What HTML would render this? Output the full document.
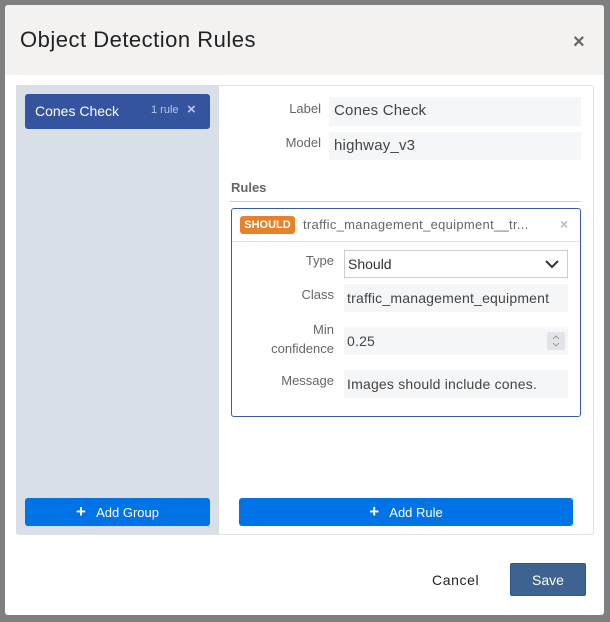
<!DOCTYPE html>
<html><head><style>
*{box-sizing:border-box;margin:0;padding:0}
body{width:610px;height:622px;background:#7f7f7f;font-family:"Liberation Sans",sans-serif;position:relative;overflow:hidden;color:#333}
.abs{position:absolute}
.modal{left:5px;top:5px;width:599px;height:610px;background:#fff;border-radius:3px;overflow:hidden}
.hdr{left:0;top:0;width:599px;height:70px;background:#f3f2f1}
.lbl{font-size:13px;color:#666;text-align:right}
.inp{background:#f5f6f7;font-size:15px;color:#444;padding-left:5px;line-height:28px;white-space:nowrap;overflow:hidden;letter-spacing:0.2px}
.btn{background:#0073e6;color:#fff;border-radius:3px;font-size:13px;text-align:center;line-height:27px}
</style></head><body>
<div class="abs modal">
 <div class="abs hdr"></div>
 <div class="abs" style="left:15px;top:22px;font-size:22px;color:#222;letter-spacing:0.5px">Object Detection Rules</div>
 <div class="abs" style="left:568px;top:26px;font-size:20px;color:#666;font-weight:bold">×</div>
</div>
<div class="abs" style="left:16px;top:85px;width:578px;height:450px;border:1px solid #dde3e8;border-radius:3px;background:#fff"></div>
<div class="abs" style="left:16px;top:85px;width:203px;height:449px;background:#d8dfe6"></div>
<div class="abs" style="left:25px;top:94px;width:185px;height:35px;background:#3454a0;border-radius:3px;color:#fff">
 <span class="abs" style="left:10px;top:9px;font-size:14px">Cones Check</span>
 <span class="abs" style="left:126px;top:10px;font-size:11px;color:#bcc6e0">1 rule</span>
 <span class="abs" style="left:162px;top:7px;font-size:15px;color:#bcc6e0;font-weight:bold">×</span>
</div>
<div class="abs lbl" style="left:240px;top:101px;width:81px">Label</div>
<div class="abs inp" style="left:329px;top:97px;width:252px;height:29px">Cones Check</div>
<div class="abs lbl" style="left:240px;top:135px;width:81px">Model</div>
<div class="abs inp" style="left:329px;top:132px;width:252px;height:28px">highway_v3</div>
<div class="abs" style="left:231px;top:180px;font-size:13px;font-weight:bold;color:#666">Rules</div>
<div class="abs" style="left:230px;top:201px;width:351px;height:1px;background:#ccd"></div>
<div class="abs" style="left:231px;top:208px;width:350px;height:209px;border:1px solid #3a5ca8;border-radius:3px"></div>
<div class="abs" style="left:232px;top:241px;width:348px;height:1px;background:#dde"></div>
<div class="abs" style="left:240px;top:216px;width:55px;height:18px;background:#e8822a;border-radius:3px;color:#fff;font-size:11px;font-weight:bold;text-align:center;line-height:18px">SHOULD</div>
<div class="abs" style="left:303px;top:217px;font-size:13px;color:#666;letter-spacing:0.3px">traffic_management_equipment__tr...</div>
<div class="abs" style="left:560px;top:216px;font-size:14px;color:#bbb;font-weight:bold">×</div>
<div class="abs lbl" style="left:250px;top:253px;width:84px">Type</div>
<div class="abs" style="left:344px;top:250px;width:224px;height:28px;border:1px solid #ccc;font-size:14px;line-height:26px;padding-left:3px;color:#333">Should
<svg class="abs" style="right:8px;top:9px" width="14" height="9" viewBox="0 0 14 9"><path d="M1 1l6 6 6-6" stroke="#333" stroke-width="2" fill="none"/></svg></div>
<div class="abs lbl" style="left:250px;top:287px;width:84px">Class</div>
<div class="abs inp" style="left:344px;top:284px;width:224px;height:28px;font-size:14px;padding-left:3px">traffic_management_equipment</div>
<div class="abs lbl" style="left:250px;top:320px;width:84px;line-height:19px">Min<br>confidence</div>
<div class="abs inp" style="left:344px;top:327px;width:224px;height:28px;font-size:14px;padding-left:3px">0.25
<svg class="abs" style="left:203px;top:5px" width="18" height="18" viewBox="0 0 18 18"><rect width="18" height="18" rx="2" fill="#e2e4e7"/><path d="M6 7l3-3 3 3M6 11l3 3 3-3" stroke="#999" stroke-width="1" fill="none"/></svg></div>
<div class="abs lbl" style="left:250px;top:373px;width:84px">Message</div>
<div class="abs inp" style="left:344px;top:370px;width:224px;height:28px;font-size:14px;padding-left:3px">Images should include cones.</div>
<div class="abs btn" style="left:25px;top:498px;width:185px;height:28px"><b style="font-size:17px">+</b>&nbsp;&nbsp; Add Group</div>
<div class="abs btn" style="left:239px;top:498px;width:334px;height:28px"><b style="font-size:17px">+</b>&nbsp;&nbsp; Add Rule</div>
<div class="abs" style="left:432px;top:572px;font-size:14px;color:#222;letter-spacing:0.6px">Cancel</div>
<div class="abs" style="left:510px;top:563px;width:76px;height:33px;background:#3f6390;border:1px solid #2c5592;border-radius:2px;color:#fff;font-size:14px;text-align:center;line-height:33px">Save</div>
</body></html>
